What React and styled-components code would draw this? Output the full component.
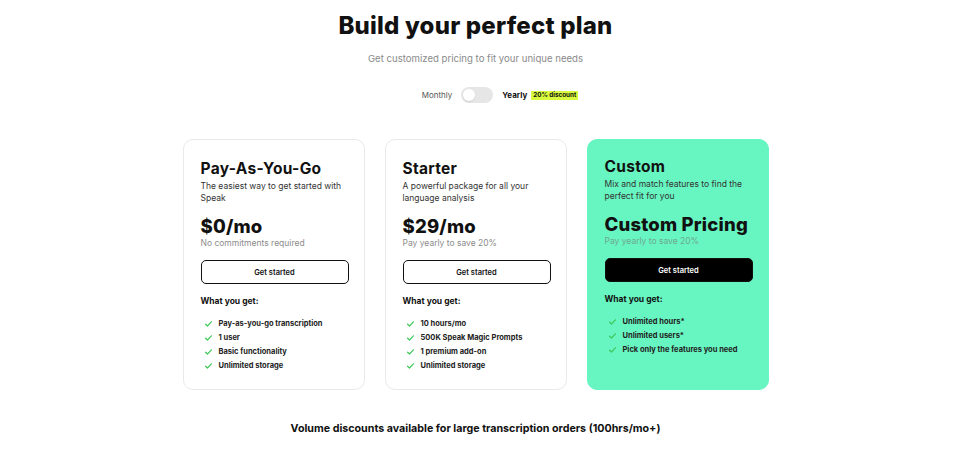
import React, { useState } from 'react';
import styled, { createGlobalStyle } from 'styled-components';

const GlobalStyle = createGlobalStyle`
	* { box-sizing: border-box; }
	body {
		margin: 0;
		background: #fff;
		font-family: Inter, "Noto Sans", sans-serif;
		color: #111;
	}
`;

const Page = styled.div`
	width: 951px;
	height: 455px;
	display: flex;
	flex-direction: column;
	align-items: center;
	padding-top: 9px;
`;

const Title = styled.h1`
	margin: 0;
	font-size: 24px;
	font-weight: 800;
	letter-spacing: 0.2px;
	line-height: 34px;
`;

const Subtitle = styled.p`
	margin: 9px 0 0;
	font-size: 9.6px;
	color: #8a8a8a;
	line-height: 14px;
`;

const ToggleRow = styled.div`
	display: flex;
	align-items: center;
	margin-top: 21px;
	margin-left: 49px;
	font-size: 8px;
	line-height: 16px;
`;

const Period = styled.span`
	color: ${props => props.$active ? '#111' : '#555'};
	font-weight: ${props => props.$active ? 700 : 400};
`;

const Switch = styled.button`
	width: 32px;
	height: 16px;
	margin: 0 9px;
	padding: 2px;
	border: none;
	border-radius: 8px;
	background: #e6e6e6;
	display: flex;
	align-items: center;
	cursor: pointer;
`;

const Knob = styled.span`
	width: 12px;
	height: 12px;
	border-radius: 50%;
	background: #fff;
	box-shadow: 0 1px 1px rgba(0, 0, 0, 0.1);
	margin-left: ${props => props.$on ? '16px' : '0'};
`;

const Badge = styled.span`
	margin-left: 4px;
	padding: 0 2px;
	background: #d8fb3e;
	font-size: 6.3px;
	font-weight: 700;
	line-height: 9px;
`;

const Cards = styled.div`
	display: flex;
	gap: 20px;
	margin-top: 36px;
`;

const Card = styled.div`
	width: 182px;
	height: 251px;
	padding: 20px 17px 0;
	border-radius: 10px;
	border: 1px solid ${props => props.$featured ? '#67f5c1' : '#e9e9e9'};
	background: ${props => props.$featured ? '#67f5c1' : '#fff'};
	display: flex;
	flex-direction: column;
	padding-top: ${props => props.$featured ? '17px' : '19px'};
`;

const PlanName = styled.h2`
	margin: 0;
	font-size: 15.5px;
	font-weight: 700;
	line-height: 19px;
	letter-spacing: 0.3px;
`;

const PlanDesc = styled.p`
	margin: 2px 0 0;
	font-size: 8.5px;
	line-height: 12px;
	color: #333;
`;

const Price = styled.div`
	margin-top: 10px;
	font-size: 18.5px;
	font-weight: 800;
	line-height: 24px;
	letter-spacing: 0.2px;
	white-space: nowrap;
`;

const PriceNote = styled.div`
	font-size: 8.5px;
	line-height: 11px;
	color: ${props => props.$featured ? '#6fa98f' : '#8c8c8c'};
`;

const CTA = styled.button`
	margin-top: 11px;
	width: 148px;
	height: 24px;
	border-radius: 5px;
	border: 1px solid #111;
	background: ${props => props.$featured ? '#000' : '#fff'};
	color: ${props => props.$featured ? '#fff' : '#111'};
	font-family: inherit;
	font-size: 7.5px;
	font-weight: 600;
	cursor: pointer;
`;

const ListTitle = styled.div`
	margin-top: 11px;
	font-size: 8.5px;
	font-weight: 700;
	line-height: 12px;
`;

const Features = styled.ul`
	list-style: none;
	margin: 11px 0 0;
	padding: 0;
	display: flex;
	flex-direction: column;
	gap: 3px;
`;

const Feature = styled.li`
	display: flex;
	align-items: center;
	gap: 7px;
	padding-left: 4px;
	font-size: 7.5px;
	font-weight: 700;
	line-height: 11px;
	color: #222;
`;

const Footer = styled.p`
	margin: 32px 0 0;
	font-size: 10.7px;
	font-weight: 700;
	line-height: 14px;
`;

const Check = () => (
	<svg width="7" height="6" viewBox="0 0 7 6" fill="none">
		<path d="M0.6 3.2 L2.5 5 L6.4 0.8" stroke="#3ec95a" strokeWidth="1.2" strokeLinecap="round" strokeLinejoin="round" />
	</svg>
);

const plans = [
	{
		name: 'Pay-As-You-Go',
		desc: 'The easiest way to get started with Speak',
		price: '$0/mo',
		note: 'No commitments required',
		features: ['Pay-as-you-go transcription', '1 user', 'Basic functionality', 'Unlimited storage'],
	},
	{
		name: 'Starter',
		desc: 'A powerful package for all your language analysis',
		price: '$29/mo',
		note: 'Pay yearly to save 20%',
		features: ['10 hours/mo', '500K Speak Magic Prompts', '1 premium add-on', 'Unlimited storage'],
	},
	{
		name: 'Custom',
		desc: 'Mix and match features to find the perfect fit for you',
		price: 'Custom Pricing',
		note: 'Pay yearly to save 20%',
		features: ['Unlimited hours*', 'Unlimited users*', 'Pick only the features you need'],
		featured: true,
	},
];

const App = () => {
	const [yearly, setYearly] = useState(false);

	return (
		<>
			<GlobalStyle />
			<Page>
				<Title>Build your perfect plan</Title>
				<Subtitle>Get customized pricing to fit your unique needs</Subtitle>
				<ToggleRow>
					<Period>Monthly</Period>
					<Switch onClick={() => setYearly(!yearly)}><Knob $on={yearly} /></Switch>
					<Period $active>Yearly</Period>
					<Badge>20% discount</Badge>
				</ToggleRow>
				<Cards>
					{plans.map(plan => (
						<Card key={plan.name} $featured={plan.featured}>
							<PlanName>{plan.name}</PlanName>
							<PlanDesc>{plan.desc}</PlanDesc>
							<Price>{plan.price}</Price>
							<PriceNote $featured={plan.featured}>{plan.note}</PriceNote>
							<CTA $featured={plan.featured}>Get started</CTA>
							<ListTitle>What you get:</ListTitle>
							<Features>
								{plan.features.map(f => (
									<Feature key={f}><Check />{f}</Feature>
								))}
							</Features>
						</Card>
					))}
				</Cards>
				<Footer>Volume discounts available for large transcription orders (100hrs/mo+)</Footer>
			</Page>
		</>
	);
};

export default App;
